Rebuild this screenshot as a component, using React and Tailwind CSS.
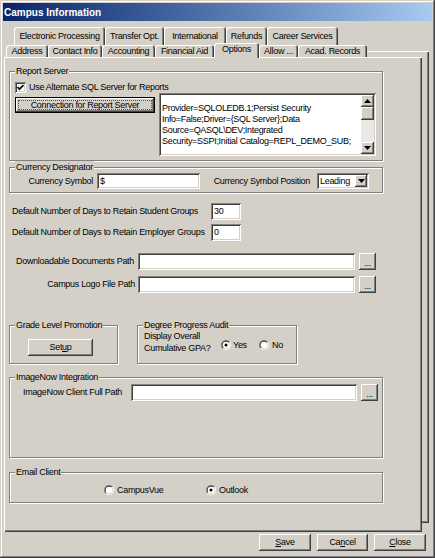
import React from "react";

const raised =
  "bg-[#d4d0c8] shadow-[inset_-1px_-1px_#404040,inset_1px_1px_#fff,inset_-2px_-2px_#808080,inset_2px_2px_#d4d0c8]";
const sunken =
  "bg-white shadow-[inset_1px_1px_#808080,inset_-1px_-1px_#fff,inset_2px_2px_#404040,inset_-2px_-2px_#d4d0c8]";

function Tab({ className, children, selected }) {
  return (
    <div
      className={`flex items-center justify-center whitespace-nowrap rounded-t-[3px] bg-[#d4d0c8] shadow-[inset_1px_1px_#fff,inset_-1px_0_#404040,inset_-2px_0_#808080] ${
        selected ? "relative z-10 -mb-[1px] h-[15px] pb-[2px]" : "h-[12px]"
      } ${className}`}
    >
      {children}
    </div>
  );
}

function TabTop({ className, children }) {
  return (
    <div
      className={`flex h-[18px] items-center justify-center whitespace-nowrap rounded-t-[3px] shadow-[inset_1px_1px_#fff,inset_-1px_0_#404040,inset_-2px_0_#808080] ${className}`}
    >
      {children}
    </div>
  );
}

function Group({ label, className, children }) {
  return (
    <div
      className={`relative border border-[#808080] shadow-[1px_1px_0_#fff,inset_1px_1px_0_#fff] ${className}`}
    >
      <span className="absolute left-[5px] top-[-7px] bg-[#d4d0c8] px-[1px] leading-[12px] whitespace-nowrap">
        {label}
      </span>
      {children}
    </div>
  );
}

function Radio({ checked }) {
  return (
    <svg width="10" height="10" viewBox="0 0 12 12" className="shrink-0">
      <defs>
        <linearGradient id="ro" x1="0" y1="0" x2="1" y2="1">
          <stop offset="0.5" stopColor="#808080" />
          <stop offset="0.5" stopColor="#ffffff" />
        </linearGradient>
        <linearGradient id="ri" x1="0" y1="0" x2="1" y2="1">
          <stop offset="0.5" stopColor="#404040" />
          <stop offset="0.5" stopColor="#d4d0c8" />
        </linearGradient>
      </defs>
      <circle cx="6" cy="6" r="6" fill="url(#ro)" />
      <circle cx="6" cy="6" r="5" fill="url(#ri)" />
      <circle cx="6" cy="6" r="4" fill="#fff" />
      {checked && <circle cx="6" cy="6" r="1.8" fill="#000" />}
    </svg>
  );
}

function Dots({ className }) {
  return (
    <div className={`${raised} flex h-[17px] w-[17px] shrink-0 items-end justify-center pb-[3px] leading-[8px] ${className}`}>
      ...
    </div>
  );
}

function Arrow({ down }) {
  return (
    <svg width="7" height="4" viewBox="0 0 7 4">
      {down ? <path d="M0 0H7L3.5 4Z" fill="#000" /> : <path d="M0 4H7L3.5 0Z" fill="#000" />}
    </svg>
  );
}

function Btn({ className, children }) {
  return (
    <div className={`${raised} flex h-[17px] items-center justify-center whitespace-nowrap ${className}`}>
      {children}
    </div>
  );
}

export default function App() {
  return (
    <div className="h-[558px] w-[435px] bg-[#d4d0c8] p-[3px] font-['Liberation_Sans',Arial,sans-serif] text-[9px] leading-[11px] tracking-[-0.3px] text-black shadow-[inset_-1px_-1px_#404040,inset_1px_1px_#d4d0c8,inset_-2px_-2px_#808080,inset_2px_2px_#fff]">
      {/* title bar */}
      <div className="flex h-[18px] items-center bg-gradient-to-r from-[#0a246a] to-[#a6caf0] pl-[1px] text-[10px] font-bold tracking-normal text-white">
        Campus Information
      </div>

      <div className="relative">
        {/* back (first row) tab page frame */}
        <div className="absolute left-[9px] top-[24px] h-[472px] w-[417px] shadow-[inset_1px_1px_#fff,inset_-1px_-1px_#404040,inset_-2px_-2px_#808080]" />

        {/* tab row 1 */}
        <div className="mt-[6px] flex pl-[11px]">
          <TabTop className="w-[91px]">Electronic Processing</TabTop>
          <TabTop className="w-[59px]">Transfer Opt.</TabTop>
          <TabTop className="w-[62px]">International</TabTop>
          <TabTop className="w-[41px]">Refunds</TabTop>
          <TabTop className="w-[71px]">Career Services</TabTop>
        </div>

        {/* tab row 2 */}
        <div className="relative flex h-[12px] items-end pl-[3px]">
          <Tab className="w-[42px]">Address</Tab>
          <Tab className="w-[54px]">Contact Info</Tab>
          <Tab className="w-[53px]">Accounting</Tab>
          <Tab className="w-[59px]">Financial Aid</Tab>
          <Tab className="w-[45px]" selected>
            Options
          </Tab>
          <Tab className="w-[39px]">Allow ...</Tab>
          <Tab className="w-[69px]">Acad. Records</Tab>
        </div>

        {/* front tab page */}
        <div className="relative ml-[1px] flex h-[475px] w-[418px] flex-col bg-[#d4d0c8] pl-[1px] pt-[1px] shadow-[inset_1px_1px_#fff,inset_-1px_-1px_#404040,inset_-2px_-2px_#808080]">
          {/* Report Server */}
          <Group label="Report Server" className="ml-[4px] mt-[13px] h-[90px] w-[374px]">
            <div className="ml-[5px] mt-[10px] flex h-[11px] items-center gap-[3px]">
              <div className={`${sunken} flex h-[11px] w-[11px] items-center justify-center`}>
                <svg width="9" height="9" viewBox="0 0 9 9">
                  <path d="M1.5 4 L3.5 6.2 L7.5 2" fill="none" stroke="#000" strokeWidth="1.7" />
                </svg>
              </div>
              <span>Use Alternate SQL Server for Reports</span>
            </div>
            <div className="ml-[5px] flex">
              <div className="mt-[4px] h-[16px] w-[140px] border border-black">
                <div className={`${raised} flex h-full w-full items-center justify-center p-[2px]`}>
                  <div className="flex h-full w-full items-center justify-center border border-dotted border-[#555] leading-[9px]">
                    Connection for Report Server
                  </div>
                </div>
              </div>
              <div className={`${sunken} ml-[4px] flex h-[63px] w-[217px] p-[2px]`}>
                <div className="flex-1 whitespace-nowrap pl-[1px] pt-[8px] leading-[11px]">
                  <div>Provider=SQLOLEDB.1;Persist Security</div>
                  <div>Info=False;Driver={"{SQL Server}"};Data</div>
                  <div>Source=QASQL\DEV;Integrated</div>
                  <div>Security=SSPI;Initial Catalog=REPL_DEMO_SUB;</div>
                </div>
                <div className="flex w-[13px] flex-col">
                  <div className={`${raised} flex h-[12px] items-center justify-center`}>
                    <Arrow />
                  </div>
                  <div className={`${raised} h-[13px]`} />
                  <div className="flex-1 bg-[#ebe9e5]" />
                  <div className={`${raised} flex h-[12px] items-center justify-center`}>
                    <Arrow down />
                  </div>
                </div>
              </div>
            </div>
          </Group>

          {/* Currency Designator */}
          <Group label="Currency Designator" className="ml-[4px] mt-[6px] h-[26px] w-[374px]">
            <div className="mt-[5px] flex items-center">
              <div className="w-[87px] pr-[4px] text-right">Currency Symbol</div>
              <div className={`${sunken} flex h-[16px] w-[103px] items-center pl-[3px]`}>$</div>
              <div className="w-[117px] pr-[7px] text-right">Currency Symbol Position</div>
              <div className={`${sunken} flex h-[16px] w-[52px] items-center p-[2px]`}>
                <span className="flex-1 pl-[1px]">Leading</span>
                <div className={`${raised} flex h-full w-[12px] items-center justify-center`}>
                  <Arrow down />
                </div>
              </div>
            </div>
          </Group>

          {/* Days rows */}
          <div className="mt-[10px] flex h-[17px] items-center">
            <div className="w-[206px] pl-[7px] whitespace-nowrap">Default Number of Days to Retain Student Groups</div>
            <div className={`${sunken} flex h-[17px] w-[30px] items-center pl-[3px]`}>30</div>
          </div>
          <div className="mt-[4px] flex h-[17px] items-center">
            <div className="w-[206px] pl-[7px] whitespace-nowrap">Default Number of Days to Retain Employer Groups</div>
            <div className={`${sunken} flex h-[17px] w-[30px] items-center pl-[3px]`}>0</div>
          </div>

          {/* Path rows */}
          <div className="mt-[12px] flex h-[17px] items-center">
            <div className="w-[133px] pr-[4px] text-right whitespace-nowrap">Downloadable Documents Path</div>
            <div className={`${sunken} h-[17px] w-[217px]`} />
            <Dots className="ml-[4px]" />
          </div>
          <div className="mt-[6px] flex h-[17px] items-center">
            <div className="w-[133px] pr-[3px] text-right whitespace-nowrap">Campus Logo File Path</div>
            <div className={`${sunken} h-[17px] w-[217px]`} />
            <Dots className="ml-[4px]" />
          </div>

          {/* Grade / Degree */}
          <div className="mt-[32px] flex">
            <Group label="Grade Level Promotion" className="ml-[4px] h-[39px] w-[109px]">
              <Btn className="ml-[18px] mt-[13px] w-[65px]">
                Set<span className="underline">u</span>p
              </Btn>
            </Group>
            <Group label="Degree Progress Audit" className="ml-[19px] h-[39px] w-[160px]">
              <div className="flex">
                <div className="mt-[4px] w-[83px] pl-[6px] leading-[12px]">
                  <div>Display Overall</div>
                  <div>Cumulative GPA?</div>
                </div>
                <div className="mt-[14px] flex h-[10px] items-center">
                  <div className="flex w-[38px] items-center gap-[2px]">
                    <Radio checked />
                    <span>Yes</span>
                  </div>
                  <div className="flex items-center gap-[3px]">
                    <Radio />
                    <span>No</span>
                  </div>
                </div>
              </div>
            </Group>
          </div>

          {/* ImageNow */}
          <Group label="ImageNow Integration" className="ml-[4px] mt-[13px] h-[81px] w-[374px]">
            <div className="mt-[6px] flex h-[17px] items-center">
              <div className="w-[121px] pl-[13px] whitespace-nowrap">ImageNow Client Full Path</div>
              <div className={`${sunken} h-[17px] w-[226px]`} />
              <Dots className="ml-[4px]" />
            </div>
          </Group>

          {/* Email Client */}
          <Group label="Email Client" className="ml-[4px] mt-[14px] h-[31px] w-[374px]">
            <div className="ml-[94px] mt-[12px] flex h-[10px] items-center">
              <div className="flex w-[102px] items-center gap-[3px]">
                <Radio />
                <span>CampusVue</span>
              </div>
              <div className="flex items-center gap-[3px]">
                <Radio checked />
                <span>Outlook</span>
              </div>
            </div>
          </Group>
        </div>

        {/* bottom buttons */}
        <div className="mt-[2px] flex justify-end gap-[6px] pr-[6px]">
          <Btn className="w-[52px]">
            <span className="underline">S</span>ave
          </Btn>
          <Btn className="w-[51px]">
            Ca<span className="underline">n</span>cel
          </Btn>
          <Btn className="w-[52px]">
            <span className="underline">C</span>lose
          </Btn>
        </div>
      </div>
    </div>
  );
}
